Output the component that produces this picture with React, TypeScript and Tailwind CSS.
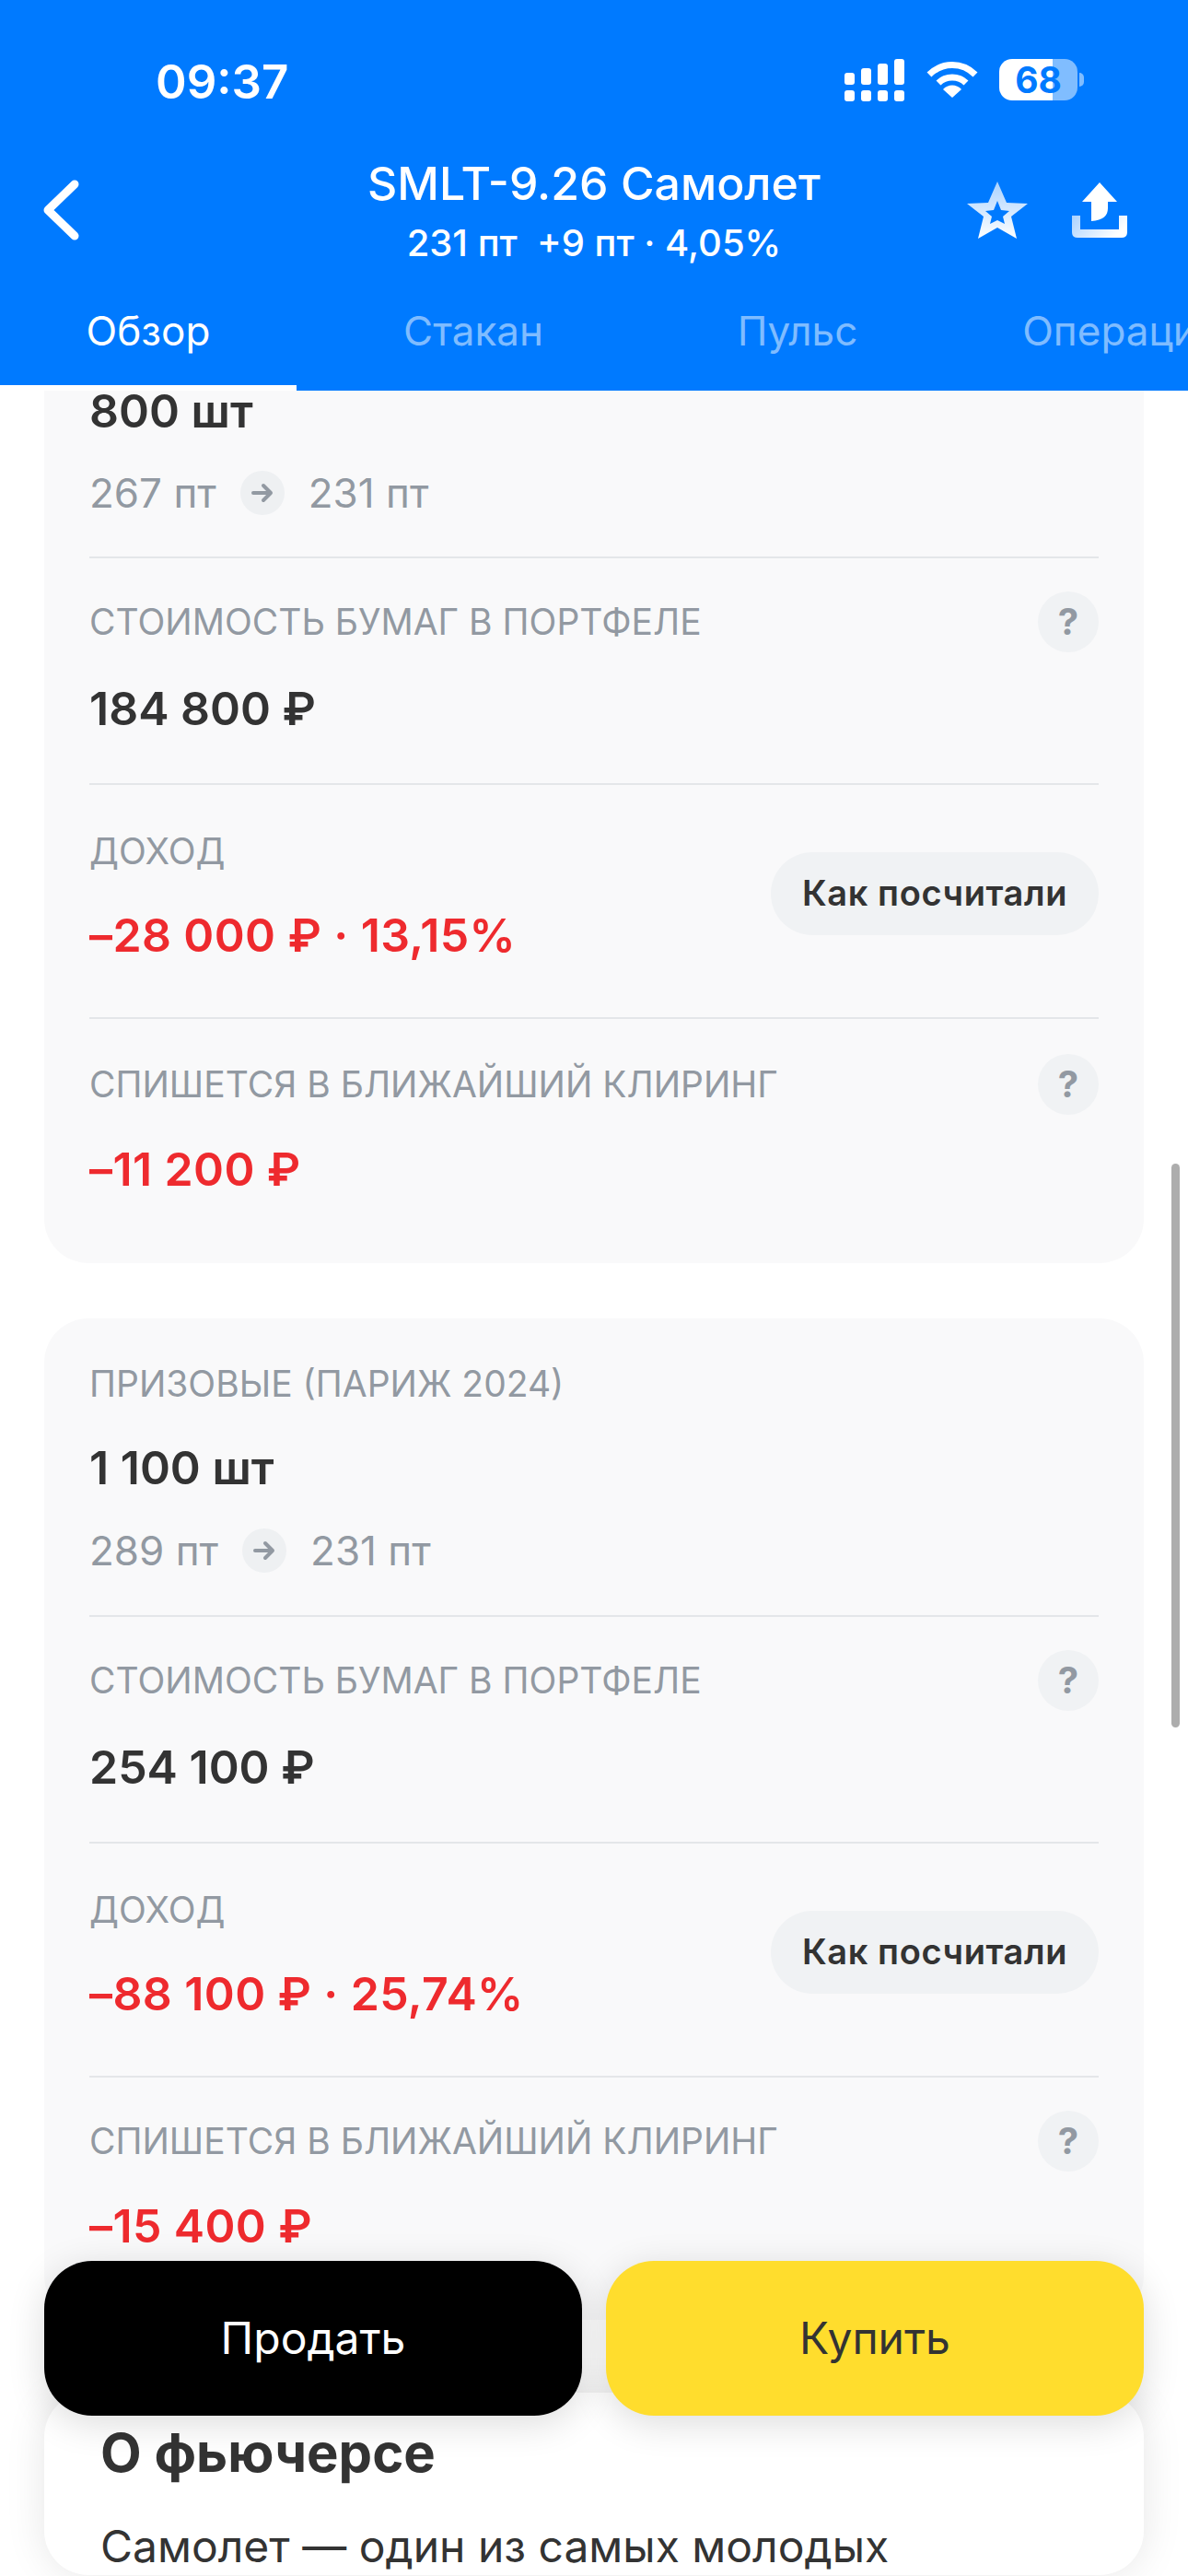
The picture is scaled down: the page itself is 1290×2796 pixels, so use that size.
import type { ReactNode } from 'react';

type Position = {
  label?: string;
  qty: string;
  from: string;
  to: string;
  value: string;
  income: string;
  clearing: string;
};

const positions: Position[] = [
  {
    qty: '800 шт',
    from: '267 пт',
    to: '231 пт',
    value: '184 800 ₽',
    income: '–28 000 ₽ · 13,15%',
    clearing: '–11 200 ₽',
  },
  {
    label: 'ПРИЗОВЫЕ (ПАРИЖ 2024)',
    qty: '1 100 шт',
    from: '289 пт',
    to: '231 пт',
    value: '254 100 ₽',
    income: '–88 100 ₽ · 25,74%',
    clearing: '–15 400 ₽',
  },
];

function SignalIcon() {
  return (
    <svg width="66" height="46" viewBox="0 0 66 46" fill="white">
      <rect x="0" y="15" width="11" height="13" rx="3" />
      <rect x="18" y="10" width="11" height="18" rx="3" />
      <rect x="36" y="5" width="11" height="23" rx="3" />
      <rect x="54" y="0" width="11" height="28" rx="3" />
      <rect x="0" y="34" width="11" height="12" rx="3" />
      <rect x="18" y="34" width="11" height="12" rx="3" />
      <rect x="36" y="34" width="11" height="12" rx="3" />
      <rect x="54" y="34" width="11" height="12" rx="3" />
    </svg>
  );
}

function WifiIcon() {
  return (
    <svg width="58" height="42" viewBox="0 0 58 42" fill="none" stroke="white">
      <path d="M4 17C18 3 40 3 54 17" strokeWidth="7" />
      <path d="M14 26C22 18 36 18 44 26" strokeWidth="7" />
      <path d="M19 33C24 27 34 27 39 33L29 42Z" fill="white" stroke="none" />
    </svg>
  );
}

function Battery() {
  return (
    <div className="flex items-center gap-[2px]">
      <div className="relative flex h-[45px] w-[85px] overflow-hidden rounded-[14px]">
        <div className="w-[58px] bg-white" />
        <div className="flex-1 bg-white/50" />
        <span className="absolute inset-0 flex items-center justify-center text-[39px] font-bold leading-none text-[#007aff]">68</span>
      </div>
      <div className="h-[15px] w-[5px] rounded-r-full bg-white/50" />
    </div>
  );
}

function StarIcon() {
  return (
    <svg width="66" height="62" viewBox="0 0 66 62">
      <defs>
        <linearGradient id="starFill" x1="0" y1="0" x2="0" y2="1">
          <stop offset="0" stopColor="#a9d2ff" />
          <stop offset="1" stopColor="#ffffff" />
        </linearGradient>
      </defs>
      <path
        fillRule="evenodd"
        fill="url(#starFill)"
        d="M33 0L43 23L66 24L48 38L54 62L33 50L12 62L18 38L0 24L23 23ZM33 21L29 31L20 32L27 38L25 46L33 42L41 46L39 38L46 32L37 31Z"
      />
    </svg>
  );
}

function ShareIcon() {
  return (
    <svg width="60" height="60" viewBox="0 0 60 60">
      <defs>
        <linearGradient id="trayFill" x1="0" y1="0" x2="1" y2="0.4">
          <stop offset="0" stopColor="#a9d2ff" />
          <stop offset="1" stopColor="#ffffff" />
        </linearGradient>
      </defs>
      <path d="M30 0L49 21H39V28C39 36 34 41 21 42V21H11Z" fill="white" />
      <path d="M0 36H9V51H51V36H60V54C60 58 58 60 54 60H6C2 60 0 58 0 54Z" fill="url(#trayFill)" />
    </svg>
  );
}

function Help() {
  return (
    <div className="flex h-[66px] w-[66px] shrink-0 items-center justify-center rounded-full bg-[#f0f2f4] text-[40px] font-bold text-[#9299a2]">
      ?
    </div>
  );
}

function Arrow() {
  return (
    <div className="flex h-[48px] w-[48px] items-center justify-center rounded-full bg-[#eef0f2]">
      <svg width="24" height="22" viewBox="0 0 24 22" fill="none" stroke="#9299a2" strokeWidth="4" strokeLinecap="round" strokeLinejoin="round">
        <path d="M2 11H21M13 3L21 11L13 19" />
      </svg>
    </div>
  );
}

function Label({ children }: { children: ReactNode }) {
  return <p className="text-[39px] leading-[44px] text-[#9299a2]">{children}</p>;
}

function Value({ children, red, tight }: { children: ReactNode; red?: boolean; tight?: boolean }) {
  return (
    <p className={`text-[50px] font-semibold ${tight ? 'leading-[44px]' : 'leading-[56px]'} ${red ? 'tracking-[0.4px] text-[#ee2a2e]' : 'text-[#333333]'}`}>
      {children}
    </p>
  );
}

function PositionCard({ item, clipped }: { item: Position; clipped?: boolean }) {
  return (
    <div className={`mx-[48px] rounded-b-[48px] bg-[#f9f9fa] px-[49px] ${clipped ? '' : 'rounded-t-[48px]'}`}>
      <div className={`border-b-2 border-[#e4e6e9] ${clipped ? 'pb-[45px]' : 'pb-[46px] pt-[49px]'}`}>
        {item.label && <div className="mb-[41px]"><Label>{item.label}</Label></div>}
        <Value tight={clipped}>{item.qty}</Value>
        <div className={`flex h-[48px] items-center gap-[26px] text-[44px] text-[#9299a2] ${clipped ? 'mt-[43px]' : 'mt-[38px]'}`}>
          <span>{item.from}</span>
          <Arrow />
          <span>{item.to}</span>
        </div>
      </div>

      <div className="border-b-2 border-[#e4e6e9] pb-[53px] pt-[47px]">
        <div className="flex h-[44px] items-center justify-between">
          <Label>СТОИМОСТЬ БУМАГ В ПОРТФЕЛЕ</Label>
          <Help />
        </div>
        <div className="mt-[44px]"><Value>{item.value}</Value></div>
      </div>

      <div className="flex items-center justify-between border-b-2 border-[#e4e6e9] pb-[61px] pt-[50px]">
        <div>
          <Label>ДОХОД</Label>
          <div className="mt-[41px]"><Value red>{item.income}</Value></div>
        </div>
        <div className="mb-[6px] flex h-[90px] w-[356px] items-center justify-center rounded-full bg-[#f0f2f4] text-[38px] font-semibold tracking-[0.6px] text-[#333333]">
          Как посчитали
        </div>
      </div>

      <div className={`pb-[74px] ${clipped ? 'pt-[49px]' : 'pt-[47px]'}`}>
        <div className="flex h-[44px] items-center justify-between">
          <Label>СПИШЕТСЯ В БЛИЖАЙШИЙ КЛИРИНГ</Label>
          <Help />
        </div>
        <div className="mt-[42px]"><Value red>{item.clearing}</Value></div>
      </div>
    </div>
  );
}

export default function App() {
  return (
    <div className="relative flex h-[2796px] w-[1290px] flex-col overflow-hidden bg-white font-['Inter',sans-serif]">
      {/* Header */}
      <div className="relative z-10 h-[424px] shrink-0 bg-[#007aff] text-white">
        <div className="flex h-[167px] items-start justify-between pl-[169px] pr-[113px] pt-[61px]">
          <span className="text-[51px] font-semibold leading-[56px]">09:37</span>
          <div className="flex items-start gap-[22px] pt-[3px]">
            <SignalIcon />
            <WifiIcon />
            <Battery />
          </div>
        </div>

        <div className="grid h-[122px] grid-cols-[1fr_auto_1fr] items-center px-[44px]">
          <svg width="44" height="66" viewBox="0 0 44 66" fill="none" stroke="white" strokeWidth="9" strokeLinecap="round" strokeLinejoin="round">
            <path d="M37 5L8 33L37 61" />
          </svg>
          <div className="text-center">
            <p className="text-[50px] font-medium leading-[56px]">SMLT-9.26 Самолет</p>
            <p className="mt-[15px] text-[40px] font-medium leading-[44px]">231 пт&nbsp; +9 пт · 4,05%</p>
          </div>
          <div className="mr-[22px] flex items-center justify-end gap-[48px]">
            <StarIcon />
            <ShareIcon />
          </div>
        </div>

        <div className="flex pt-[45px] text-[44px] leading-[50px]">
          <div className="w-[322px] shrink-0 text-center">Обзор</div>
          <div className="ml-[16px] w-[352px] shrink-0 text-center text-white/50">Стакан</div>
          <div className="w-[352px] shrink-0 text-center text-white/50">Пульс</div>
          <div className="w-[352px] shrink-0 text-center text-white/50">Операции</div>
        </div>
        <div className="absolute bottom-0 left-0 h-[6px] w-[322px] bg-white" />
      </div>

      {/* Scrollable content */}
      <div className="min-h-0 flex-1 overflow-hidden">
        <PositionCard item={positions[0]} clipped />
        <div className="mt-[60px]">
          <PositionCard item={positions[1]} />
        </div>
        <div className="relative mx-[48px] mt-[79px] rounded-[48px] bg-white px-[61px] pt-[30px] shadow-[0_0_44px_rgba(0,0,0,0.1)]">
          <h2 className="text-[58px] font-bold leading-[70px] text-[#333333]">О фьючерсе</h2>
          <p className="mt-[36px] text-[48px] leading-[62px] text-[#333333]">Самолет — один из самых молодых</p>
        </div>
      </div>

      {/* Scrollbar */}
      <div className="absolute left-[1272px] top-[1263px] h-[612px] w-[9px] rounded-full bg-[#adadad]" />

      {/* Trade buttons */}
      <div className="absolute left-[48px] top-[2454px] flex w-[1194px] gap-[26px]">
        <div className="flex h-[168px] flex-1 items-center justify-center rounded-[52px] bg-black text-[48px] text-white shadow-[0_8px_40px_rgba(0,0,0,0.14)]">
          Продать
        </div>
        <div className="flex h-[168px] flex-1 items-center justify-center rounded-[52px] bg-[#ffdd2d] text-[48px] text-[#333333] shadow-[0_8px_40px_rgba(0,0,0,0.14)]">
          Купить
        </div>
      </div>
    </div>
  );
}
